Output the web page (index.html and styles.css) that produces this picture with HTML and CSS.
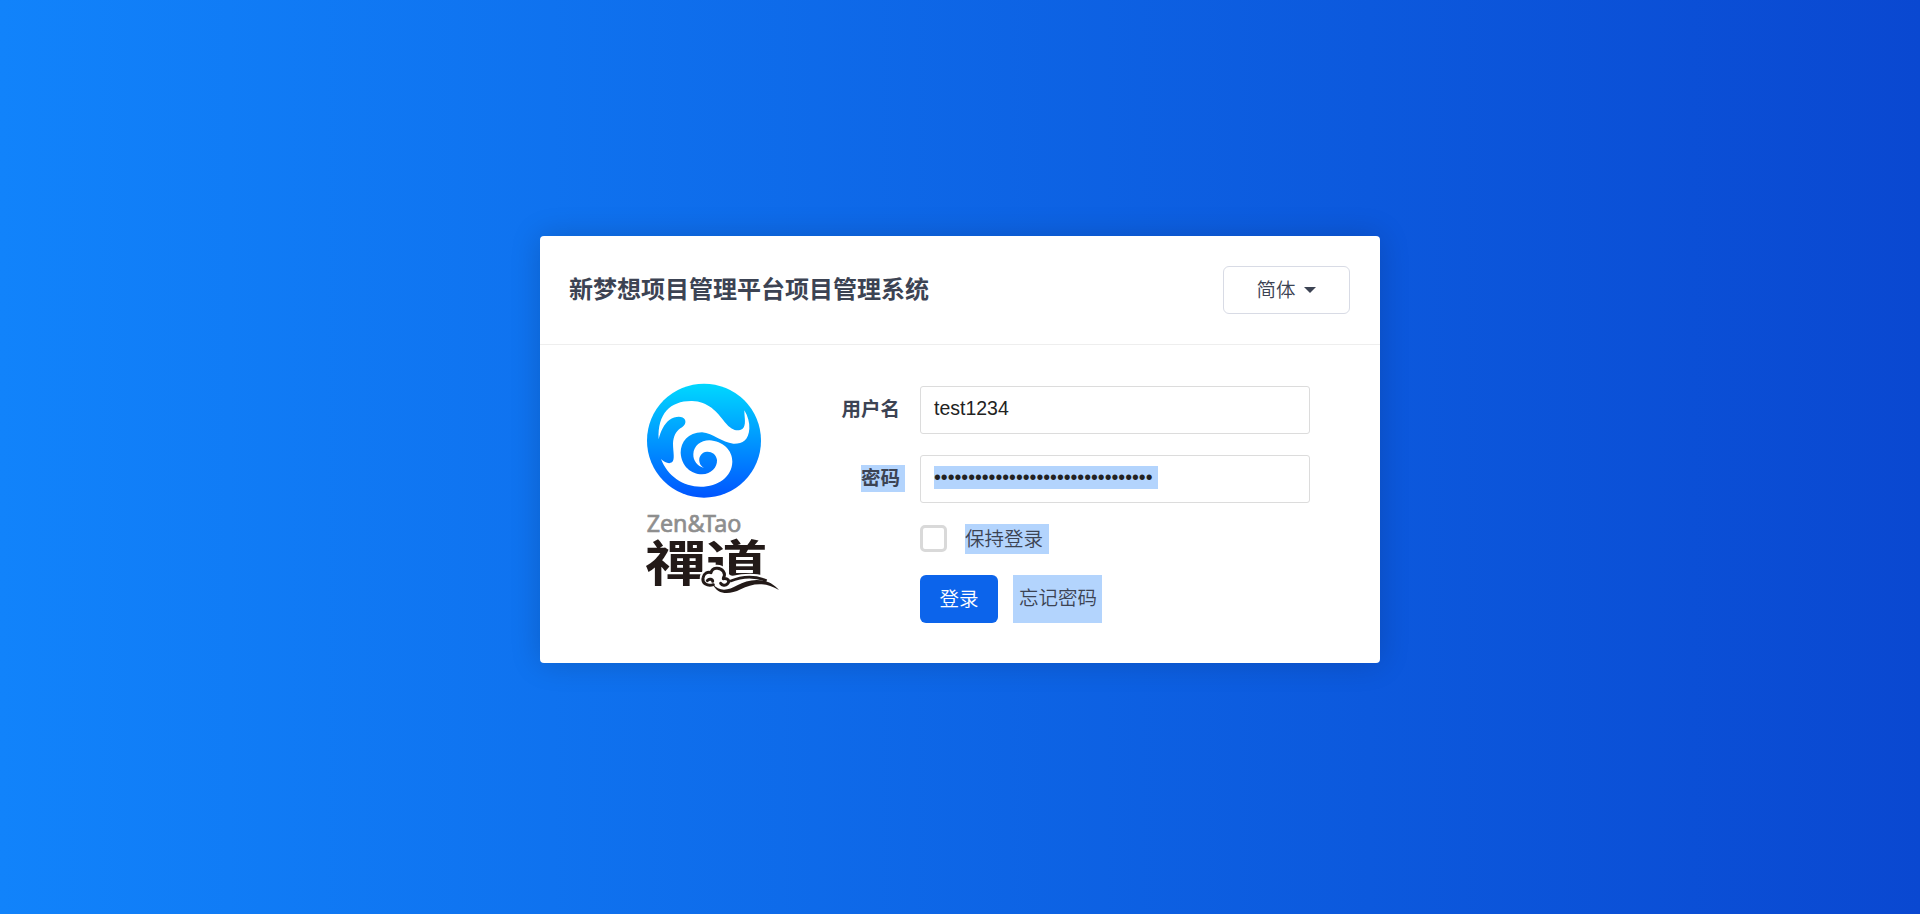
FILE: index.html
```html
<!DOCTYPE html>
<html lang="zh-CN">
<head>
<meta charset="utf-8">
<title>新梦想项目管理平台项目管理系统</title>
<link rel="stylesheet" href="styles.css">
</head>
<body>
<main class="login-panel">
  <header class="panel-head">
    <h2 class="panel-title">新梦想项目管理平台项目管理系统</h2>
    <button class="lang-btn" type="button"><span class="lang-name">简体</span><span class="caret"></span></button>
  </header>
  <div class="panel-body">
    <svg class="logo" viewBox="0 0 480 720" role="img" aria-label="Zen&amp;Tao 禪道">
      <defs>
        <linearGradient id="sky" x1="0" y1="0" x2="0" y2="1">
          <stop offset="0" stop-color="#00d8ff"/>
          <stop offset="1" stop-color="#0055ff"/>
        </linearGradient>
      </defs>
      <circle cx="222" cy="212" r="171" fill="url(#sky)"/>
      <path fill="#fff" d="M86 208C82 130 122 92 186 93C234 94 262 126 284 156C306 183 324 185 337 177C350 166 343 144 343 121C354 139 359 158 358 176C356 211 336 222 310 221C276 218 250 190 216 187C174 188 152 216 152 248C154 289 184 312 216 313C244 312 262 292 261 270C259 252 244 244 231 245C214 246 204 262 209 278C211 285 216 290 222 294C202 288 189 272 190 252C191 228 212 211 238 211C278 213 307 240 307 275C306 320 264 350 212 350C160 350 112 318 93 267C104 277 116 283 126 277C136 269 129 246 129 220C130 199 138 184 151 175C163 168 169 159 165 149C159 137 136 137 118 150C103 162 92 182 86 208Z"/>
      <text class="logo-latin" x="50" y="486" textLength="284" lengthAdjust="spacingAndGlyphs">Zen&amp;Tao</text>
      <text class="logo-han" transform="translate(45 634) scale(1.28 1)" x="0" y="0" textLength="288" lengthAdjust="spacing">禪道</text>
      <path fill="#fff" stroke="#fff" stroke-width="16" stroke-linejoin="round" d="M218 632C214 610 230 602 240 606C246 588 272 588 282 604C286 616 292 622 306 626C350 616 410 612 446 654C400 640 350 648 316 664C284 674 258 666 246 650C232 650 222 644 218 632Z"/>
      <path fill="none" stroke="#231a18" stroke-width="9" stroke-linecap="round" stroke-linejoin="round" d="M250 644C232 650 216 640 219 624C221 610 234 604 243 608C246 592 270 590 280 604C286 613 284 618 280 624M280 626C292 624 302 632 292 642C286 648 276 646 272 640M232 632C238 624 248 628 248 634"/>
      <path fill="#231a18" d="M248 642C268 666 294 662 322 646C356 626 410 618 447 660C404 634 366 640 332 658C296 676 262 674 248 642Z"/>
      <path fill="none" stroke="#231a18" stroke-width="8" d="M300 634C338 618 376 618 410 632"/>
    </svg>
    <form class="login-form">
      <label class="field-label">用户名</label>
      <div class="field">test1234</div>
      <label class="field-label"><span class="selected label-selected">密码</span></label>
      <div class="field"><span class="selected password">••••••••••••••••••••••••••••••••</span></div>
      <div class="keep-row"><span class="checkbox"></span><span class="selected keep-text">保持登录</span></div>
      <div class="actions"><button class="submit" type="button">登录</button><a class="selected forgot">忘记密码</a></div>
    </form>
  </div>
</main>
</body>
</html>
```
FILE: styles.css
```css
* { box-sizing: border-box; }
body {
  margin: 0;
  height: 914px;
  padding-top: 236px;
  overflow: hidden;
  background: linear-gradient(-90deg, #0a48d1 0%, #1183fb 100%);
  font-family: "Liberation Sans", "Noto Sans CJK SC", sans-serif;
  font-size: 19.5px;
  font-weight: 350;
  color: #3c4353;
}
.login-panel {
  width: 840px;
  height: 427px;
  margin: 0 auto;
  background: #fff;
  border-radius: 4px;
  box-shadow: 0 0 30px rgba(0, 0, 0, .17);
}
.panel-head {
  display: flex;
  align-items: center;
  justify-content: space-between;
  height: 109px;
  padding: 0 30px;
  border-bottom: 1px solid #eee;
}
.panel-title { margin: 0 0 0 -1px; font-size: 24px; line-height: 36px; font-weight: 700; }
.lang-btn {
  display: flex;
  align-items: center;
  justify-content: center;
  gap: 8px;
  width: 127px;
  height: 48px;
  padding: 0 1px 0 0;
  border: 1px solid #d8dbe5;
  border-radius: 6px;
  background: #fff;
  color: inherit;
  font: inherit;
}
.lang-name { padding-bottom: 4px; }
.caret {
  border: 6px solid transparent;
  border-top-color: #3c4353;
  border-bottom: 0;
}
.panel-body { display: flex; padding: 25px 70px 0 90px; }
.logo { width: 160px; height: 240px; flex: none; }
.logo-latin { font: 400 69px "Noto Sans", sans-serif; fill: #8e8e8e; stroke: #8e8e8e; stroke-width: 2; }
.logo-han { font: 700 146px "Noto Sans CJK TC", sans-serif; fill: #231a18; }
.login-form {
  display: grid;
  grid-template-columns: 130px 390px;
  grid-template-rows: 48px 48px 30px 48px;
  row-gap: 21px;
  padding-top: 16px;
}
.field-label { padding: 10px 20px 0 0; text-align: right; font-weight: 700; line-height: 26px; }
.selected { background: #b3d4fd; }
.label-selected { display: inline-block; height: 27px; padding-right: 5px; margin-right: -5px; }
.field {
  display: flex;
  align-items: center;
  height: 48px;
  padding: 0 13px 3px;
  border: 1px solid #dcdcdc;
  border-radius: 3px;
  color: #222;
}
.password { height: 23px; line-height: 22px; padding-right: 6px; }
.keep-row, .actions { grid-column: 2; display: flex; align-items: center; }
.keep-row { gap: 18px; }
.checkbox { width: 27px; height: 27px; margin-bottom: 1px; border: 3px solid #d9d9d9; border-radius: 5px; }
.keep-text { height: 30px; line-height: 30px; padding-right: 6px; }
.actions { gap: 15px; }
.submit {
  width: 78px;
  height: 48px;
  padding: 0 0 4px;
  border: 0;
  border-radius: 6px;
  background: #0c64eb;
  color: #fff;
  font: inherit;
}
.forgot { height: 48px; line-height: 47px; padding: 0 5px 0 6px; }
```
